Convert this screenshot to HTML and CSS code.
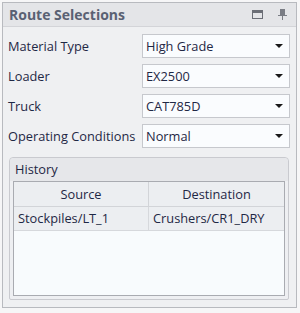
FILE: index.html
```html
<!DOCTYPE html>
<html lang="en">
<head>
    <meta charset="UTF-8">
    <title>Route Selections</title>
    <link rel="stylesheet" href="styles.css">
</head>
<body>
    <div class="panel">
        <div class="title-bar">
            <span class="title">Route Selections</span>
            <span class="btn">
                <svg width="11" height="9" viewBox="0 0 11 9"><rect x="0.5" y="0.5" width="10" height="8" fill="none" stroke="#6b6e76" stroke-width="1"/><rect x="1" y="1" width="9" height="2" fill="#6b6e76"/></svg>
            </span>
            <span class="btn">
                <svg width="9" height="11" viewBox="0 0 9 11"><rect x="2" y="0" width="5" height="6" fill="#7a7d85"/><rect x="0" y="6" width="9" height="1" fill="#7a7d85"/><rect x="4" y="7" width="1" height="4" fill="#7a7d85"/></svg>
            </span>
        </div>
        <div class="content">
            <div class="row">
                <label>Material Type</label>
                <div class="combo"><span>High Grade</span><i class="arrow"></i></div>
            </div>
            <div class="row">
                <label>Loader</label>
                <div class="combo"><span>EX2500</span><i class="arrow"></i></div>
            </div>
            <div class="row">
                <label>Truck</label>
                <div class="combo"><span>CAT785D</span><i class="arrow"></i></div>
            </div>
            <div class="row">
                <label>Operating Conditions</label>
                <div class="combo"><span>Normal</span><i class="arrow"></i></div>
            </div>

            <!-- History group -->
            <div class="group">
                <div class="group-head">History</div>
                <div class="grid">
                    <div class="grid-head">
                        <div class="cell">Source</div>
                        <div class="cell">Destination</div>
                    </div>
                    <div class="grid-row">
                        <div class="cell">Stockpiles/LT_1</div>
                        <div class="cell">Crushers/CR1_DRY</div>
                    </div>
                </div>
            </div>
        </div>
    </div>
</body>
</html>
```

FILE: styles.css
```css
body {
    margin: 0;
    padding: 2px 3px 4px 2px;
    background: #f6f6f7;
    font-family: "Open Sans", sans-serif;
    font-size: 12.8px;
    color: #1f2845;
}
.panel {
    border: 1px solid #b8babf;
    background: #eff0f2;
    height: 306px;
    box-sizing: border-box;
    display: flex;
    flex-direction: column;
}
.title-bar {
    display: flex;
    align-items: center;
    height: 23px;
    padding: 0 6px 0 6px;
    background: #e4e5e8;
    border-bottom: 1px solid #d3d4d8;
}
.title {
    flex: 1;
    font-weight: bold;
    font-size: 14px;
    color: #5a6173;
}
.btn {
    display: flex;
    align-items: center;
    justify-content: center;
    width: 15px;
    height: 15px;
    margin-left: 10px;
}
.content {
    flex: 1;
    padding: 7px 6px 7px 5px;
    display: flex;
    flex-direction: column;
}
.row {
    display: flex;
    align-items: center;
    height: 24px;
    margin-bottom: 6px;
}
.row label {
    width: 134px;
    white-space: nowrap;
}
.combo {
    flex: 1;
    height: 24px;
    box-sizing: border-box;
    border: 1px solid #c6c8cd;
    background: #fafcfe;
    display: flex;
    align-items: center;
    padding: 0 6px 0 3px;
}
.combo span {
    flex: 1;
}
.arrow {
    width: 0;
    height: 0;
    border-left: 4px solid transparent;
    border-right: 4px solid transparent;
    border-top: 4px solid #1a1a1a;
}
.group {
    flex: 1;
    margin: 3px 1px 0 1px;
    border: 1px solid #c9cacf;
    border-radius: 4px 4px 2px 2px;
    background: #eeeff2;
    display: flex;
    flex-direction: column;
    padding: 0 3px 3px 3px;
}
.group-head {
    height: 23px;
    line-height: 23px;
    padding-left: 5px;
    background: #e6e7ea;
    margin: 0 -3px;
    border-radius: 4px 4px 0 0;
}
.grid {
    flex: 1;
    border: 1px solid #a9abb1;
    background: #f8fbfd;
}
.grid-head, .grid-row {
    display: grid;
    grid-template-columns: 135px 1fr;
}
.grid-head {
    height: 24px;
    background: #eceef1;
    border-bottom: 1px solid #d2d4d8;
}
.grid-head .cell {
    text-align: center;
    line-height: 24px;
}
.grid-head .cell:first-child {
    border-right: 1px solid #d2d4d8;
}
.grid-row {
    height: 23px;
    background: #eceef1;
    border-bottom: 1px solid #d6d8dc;
}
.grid-row .cell {
    line-height: 23px;
    padding-left: 4px;
    white-space: nowrap;
}
.grid-row .cell:first-child {
    border-right: 1px solid #d6d8dc;
}
```
